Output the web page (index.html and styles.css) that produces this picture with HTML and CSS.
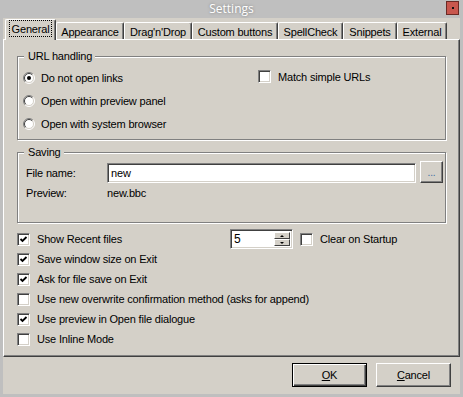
FILE: index.html
```html
<!DOCTYPE html>
<html lang="en">
<head>
    <meta charset="UTF-8">
    <title>Settings</title>
    <link rel="stylesheet" href="styles.css">
</head>
<body>
    <div class="window">
        <div class="titlebar">
            <span class="title">Settings</span>
            <span class="close"><i></i></span>
        </div>

        <div class="dialog">
            <!-- Pestañas -->
            <div class="tabs">
                <div class="tab active" style="width:51px"><span class="focus">General</span></div>
                <div class="tab" style="width:68px">Appearance</div>
                <div class="tab" style="width:68px">Drag'n'Drop</div>
                <div class="tab" style="width:86px">Custom buttons</div>
                <div class="tab" style="width:65px">SpellCheck</div>
                <div class="tab" style="width:54px">Snippets</div>
                <div class="tab" style="width:50px">External</div>
            </div>

            <div class="page">
                <!-- URL handling -->
                <div class="group url-group">
                    <span class="legend">URL handling</span>
                    <div class="url-cols">
                        <div class="col">
                            <label class="row radio-row">
                                <span class="radio on"></span>Do not open links
                            </label>
                            <label class="row radio-row">
                                <span class="radio"></span>Open within preview panel
                            </label>
                            <label class="row radio-row">
                                <span class="radio"></span>Open with system browser
                            </label>
                        </div>
                        <div class="col">
                            <label class="row check-row">
                                <span class="check"></span>Match simple URLs
                            </label>
                        </div>
                    </div>
                </div>

                <!-- Saving -->
                <div class="group save-group">
                    <span class="legend">Saving</span>
                    <div class="save-row">
                        <span class="save-label">File name:</span>
                        <span class="field file-field">new</span>
                        <span class="btn browse">...</span>
                    </div>
                    <div class="save-row preview-row">
                        <span class="save-label">Preview:</span>
                        <span>new.bbc</span>
                    </div>
                </div>

                <!-- Opciones -->
                <div class="options">
                    <div class="row check-row">
                        <span class="check on"></span><span class="recent-label">Show Recent files</span>
                        <span class="spinner">
                            <span class="spin-value">5</span>
                            <span class="spin-btns">
                                <span class="spin-btn"><b class="up"></b></span>
                                <span class="spin-btn"><b class="down"></b></span>
                            </span>
                        </span>
                        <span class="check clear-check"></span>Clear on Startup
                    </div>
                    <div class="row check-row"><span class="check on"></span>Save window size on Exit</div>
                    <div class="row check-row"><span class="check on"></span>Ask for file save on Exit</div>
                    <div class="row check-row"><span class="check"></span>Use new overwrite confirmation method (asks for append)</div>
                    <div class="row check-row"><span class="check on"></span>Use preview in Open file dialogue</div>
                    <div class="row check-row"><span class="check"></span>Use Inline Mode</div>
                </div>
            </div>

            <div class="buttons">
                <span class="btn default"><u>O</u>K</span>
                <span class="btn"><u>C</u>ancel</span>
            </div>
        </div>
    </div>
</body>
</html>
```

FILE: styles.css
```css
body {
    margin: 0;
    padding: 0;
    background: #bfbfbf;
    font-family: 'Liberation Sans', Arial, sans-serif;
    font-size: 11px;
    letter-spacing: -0.18px;
    color: #000;
}

.window {
    width: 463px;
    height: 397px;
    background: #bfbfbf; /* marco de la ventana */
    display: flex;
    flex-direction: column;
    overflow: hidden;
}

/* Barra de título */
.titlebar {
    height: 18px;
    position: relative;
    display: flex;
    justify-content: center;
    align-items: center;
}

.title {
    font-family: 'Open Sans', 'Noto Sans', sans-serif;
    font-size: 12px;
    letter-spacing: 0;
    color: #fff;
    text-shadow: 0 0 3px rgba(0, 0, 0, 0.35);
    margin-top: -1px;
}

.close {
    position: absolute;
    top: 1px;
    right: 4px;
    width: 11px;
    height: 12px;
    background: #c8574e;
    border: 1px solid #6b2a25;
    display: flex;
    justify-content: center;
    align-items: center;
}

.close i {
    width: 2px;
    height: 2px;
    background: #111;
}

/* Cuerpo del diálogo */
.dialog {
    margin: 0 3px 3px 3px;
    background: #d4d0c8;
    flex: 1;
    display: flex;
    flex-direction: column;
}

.tabs {
    display: flex;
    height: 21px;
    padding-left: 2px;
    align-items: flex-end;
    position: relative;
    z-index: 2;
}

.tab {
    height: 17px;
    box-sizing: border-box;
    border-top: 1px solid #fff;
    border-left: 1px solid #fff;
    border-right: 1px solid #404040;
    box-shadow: inset -1px 0 #808080;
    border-radius: 2px 2px 0 0;
    display: flex;
    justify-content: center;
    align-items: center;
    white-space: nowrap;
    padding-top: 1px;
}

.tab.active {
    height: 21px;
    margin-bottom: -1px;
    background: #d4d0c8;
    padding-top: 0;
    padding-bottom: 3px;
    position: relative;
}

.focus {
    outline: 1px dotted #000;
    padding: 2px 2px 1px 2px;
}

.page {
    height: 318px;
    box-sizing: border-box;
    border: 1px solid;
    border-color: #fff #404040 #404040 #fff;
    box-shadow: inset -1px -1px #808080;
    padding: 16px 11px 0 13px;
    display: flex;
    flex-direction: column;
}

/* Grupos */
.group {
    position: relative;
    border: 1px solid #808080;
    box-shadow: inset 1px 1px #fff, 1px 1px #fff;
    margin-right: 2px;
}

.legend {
    position: absolute;
    top: -7px;
    left: 6px;
    padding: 0 3px 0 4px;
    background: #d4d0c8;
    line-height: 13px;
}

.url-group {
    height: 84px;
    padding: 9px 0 0 5px;
    box-sizing: border-box;
}

.url-cols {
    display: grid;
    grid-template-columns: 235px 1fr;
}

.row {
    display: flex;
    align-items: center;
    white-space: nowrap;
}

.radio-row {
    height: 23px;
}

.url-cols .check-row {
    height: 23px;
    margin-top: -1px;
}

.save-group {
    margin-top: 12px;
    height: 71px;
    box-sizing: border-box;
    padding: 9px 0 0 8px;
}

.save-row {
    display: flex;
    align-items: center;
    height: 22px;
}

.preview-row {
    height: 18px;
}

.save-label {
    width: 81px;
}

.field {
    box-sizing: border-box;
    border: 1px solid;
    border-color: #808080 #fff #fff #808080;
    box-shadow: inset 1px 1px #404040, inset -1px -1px #d4d0c8;
    background: #fff;
    display: flex;
    align-items: center;
}

.file-field {
    width: 309px;
    height: 20px;
    padding-left: 3px;
}

.btn {
    box-sizing: border-box;
    border: 1px solid;
    border-color: #fff #404040 #404040 #fff;
    box-shadow: inset -1px -1px #808080;
    display: flex;
    justify-content: center;
    align-items: center;
}

.browse {
    width: 23px;
    height: 22px;
    margin-left: 4px;
    margin-top: -3px;
    color: #3a6ea5;
    font-size: 10px;
    line-height: 1;
    padding-top: 3px;
}

/* Casillas y radios */
.check {
    width: 13px;
    height: 13px;
    box-sizing: border-box;
    border: 1px solid;
    border-color: #808080 #fff #fff #808080;
    box-shadow: inset 1px 1px #404040, inset -1px -1px #d4d0c8;
    background: #fff;
    margin-right: 7px;
    flex: none;
    position: relative;
}

.check.on {
    background: #fff url("data:image/svg+xml,%3Csvg xmlns='http://www.w3.org/2000/svg' width='11' height='11'%3E%3Cpath d='M2.5 5 L4.5 7 L8.5 3' fill='none' stroke='%23000' stroke-width='1.8'/%3E%3C/svg%3E") center/11px 11px no-repeat;
}

.radio {
    width: 12px;
    height: 12px;
    margin-right: 6px;
    flex: none;
    background: url("data:image/svg+xml,%3Csvg xmlns='http://www.w3.org/2000/svg' width='12' height='12'%3E%3Ccircle cx='6' cy='6' r='5' fill='%23fff'/%3E%3Cpath d='M2.1 9.9 A5.5 5.5 0 0 1 9.9 2.1' fill='none' stroke='%23808080'/%3E%3Cpath d='M9.9 2.1 A5.5 5.5 0 0 1 2.1 9.9' fill='none' stroke='%23fff'/%3E%3Cpath d='M2.8 9.2 A4.5 4.5 0 0 1 9.2 2.8' fill='none' stroke='%23404040'/%3E%3Cpath d='M9.2 2.8 A4.5 4.5 0 0 1 2.8 9.2' fill='none' stroke='%23d4d0c8'/%3E%3C/svg%3E") no-repeat;
}

.radio.on {
    background: url("data:image/svg+xml,%3Csvg xmlns='http://www.w3.org/2000/svg' width='12' height='12'%3E%3Ccircle cx='6' cy='6' r='5' fill='%23fff'/%3E%3Cpath d='M2.1 9.9 A5.5 5.5 0 0 1 9.9 2.1' fill='none' stroke='%23808080'/%3E%3Cpath d='M9.9 2.1 A5.5 5.5 0 0 1 2.1 9.9' fill='none' stroke='%23fff'/%3E%3Cpath d='M2.8 9.2 A4.5 4.5 0 0 1 9.2 2.8' fill='none' stroke='%23404040'/%3E%3Cpath d='M9.2 2.8 A4.5 4.5 0 0 1 2.8 9.2' fill='none' stroke='%23d4d0c8'/%3E%3Ccircle cx='6' cy='6' r='2' fill='%23000'/%3E%3C/svg%3E") no-repeat;
}

/* Opciones generales */
.options {
    margin-top: 6px;
}

.options .check-row {
    height: 20px;
}

.recent-label {
    width: 193px;
}

.spinner {
    width: 63px;
    height: 20px;
    box-sizing: border-box;
    border: 1px solid;
    border-color: #808080 #fff #fff #808080;
    box-shadow: inset 1px 1px #404040, inset -1px -1px #d4d0c8;
    background: #fff;
    display: flex;
    padding: 2px 2px 2px 3px;
    margin-right: 7px;
}

.spin-value {
    flex: 1;
    display: flex;
    align-items: center;
    font-size: 12px;
}

.spin-btns {
    width: 16px;
    display: flex;
    flex-direction: column;
}

.spin-btn {
    flex: 1;
    background: #d4d0c8;
    border: 1px solid;
    border-color: #fff #404040 #404040 #fff;
    display: flex;
    justify-content: center;
    align-items: center;
}

.spin-btn b {
    width: 0;
    height: 0;
    border-left: 2px solid transparent;
    border-right: 2px solid transparent;
}

.spin-btn .up {
    border-bottom: 2px solid #000;
}

.spin-btn .down {
    border-top: 2px solid #000;
}

/* Botones inferiores */
.buttons {
    display: flex;
    justify-content: flex-end;
    gap: 9px;
    padding: 6px 9px 0 0;
}

.buttons .btn {
    width: 75px;
    height: 24px;
}

.btn.default {
    border: 1px solid #000;
    box-shadow: inset 1px 1px #fff, inset -1px -1px #404040, inset -2px -2px #808080;
}
```
